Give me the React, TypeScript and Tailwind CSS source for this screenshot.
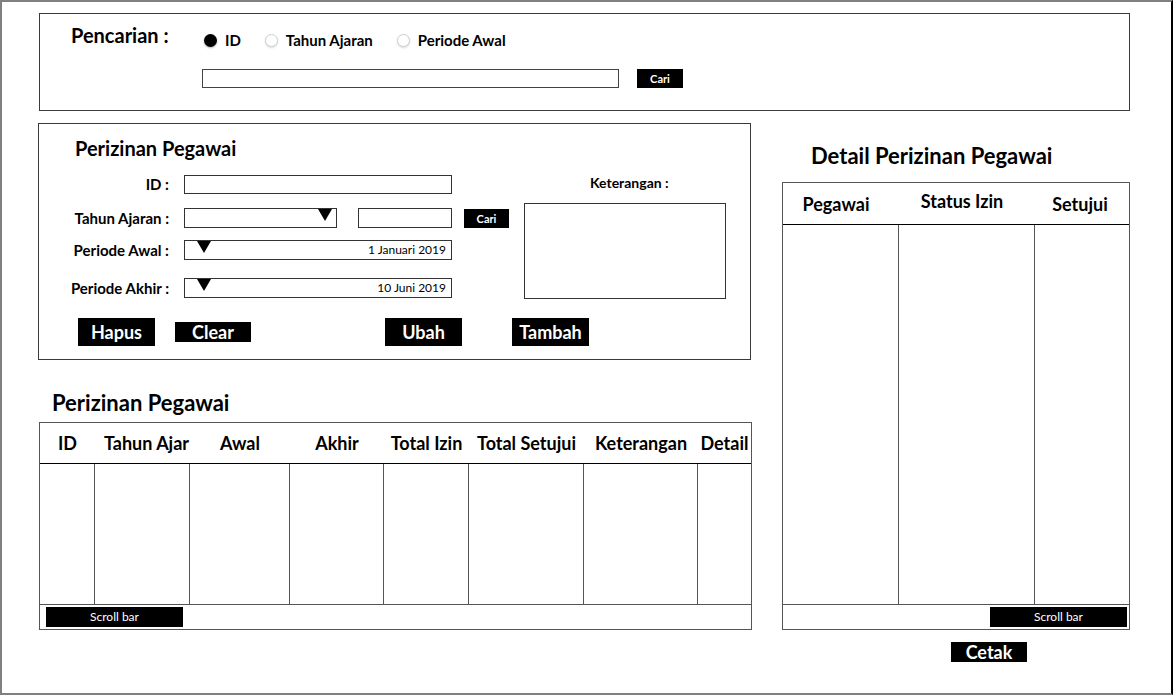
import type { ReactNode } from "react";

function Radio({ checked, label, className }: { checked?: boolean; label: string; className?: string }) {
  return (
    <div className={`flex items-center ${className ?? ""}`}>
      {checked ? (
        <span className="h-[13px] w-[13px] rounded-full bg-black shadow-[0_1px_2px_rgba(0,0,0,0.3)]" />
      ) : (
        <span className="h-[13px] w-[13px] rounded-full border border-[#cfcfcf] bg-white shadow-[0_1px_2px_rgba(0,0,0,0.15)]" />
      )}
      <span className="ml-[8px] text-[15px] font-bold leading-none">{label}</span>
    </div>
  );
}

function DownArrow({ className }: { className?: string }) {
  return <span className={`h-0 w-0 border-x-[7px] border-t-[12px] border-x-transparent border-t-black ${className ?? ""}`} />;
}

function Field({ label, children, className }: { label: string; children: ReactNode; className?: string }) {
  return (
    <div className={`flex items-center ${className ?? ""}`}>
      <span className="w-[130px] text-right text-[15px] font-bold leading-none">{label}</span>
      <div className="ml-[15px] flex items-center">{children}</div>
    </div>
  );
}

function DateInput({ value }: { value: string }) {
  return (
    <div className="flex h-[20px] w-[268px] items-start border border-[#333]">
      <DownArrow className="ml-[12px]" />
      <span className="ml-auto self-center pr-[5px] text-[12px] leading-none">{value}</span>
    </div>
  );
}

function BlackButton({ children, className }: { children: ReactNode; className: string }) {
  return (
    <button type="button" className={`flex items-center justify-center bg-black font-bold leading-none text-white ${className}`}>
      {children}
    </button>
  );
}

const listCols = [
  { label: "ID", w: "w-[55px]" },
  { label: "Tahun Ajar", w: "w-[95px] pl-[8px]" },
  { label: "Awal", w: "w-[100px]" },
  { label: "Akhir", w: "w-[94px]" },
  { label: "Total Izin", w: "w-[85px]" },
  { label: "Total Setujui", w: "w-[115px]" },
  { label: "Keterangan", w: "w-[114px]" },
  { label: "Detail", w: "flex-1" },
];

export default function App() {
  return (
    <div className="h-[695px] w-[1173px] border-2 border-[#808080] border-r-black bg-white font-['Lato',sans-serif] text-black">
      {/* Pencarian */}
      <div className="ml-[37px] mt-[11px] flex h-[98px] w-[1091px] border border-[#3a3a3a]">
        <div className="w-[162px] pl-[31px] pt-[9px] text-[20px] font-bold leading-[24px]">Pencarian :</div>
        <div className="pt-[16px]">
          <div className="flex h-[20px] items-center">
            <Radio checked label="ID" className="ml-[2px]" />
            <Radio label="Tahun Ajaran" className="ml-[24px]" />
            <Radio label="Periode Awal" className="ml-[24px]" />
          </div>
          <div className="mt-[19px] flex items-center">
            <div className="h-[19px] w-[417px] border border-[#444]" />
            <BlackButton className="ml-[18px] h-[19px] w-[46px] text-[11px]">Cari</BlackButton>
          </div>
        </div>
      </div>

      <div className="ml-[36px] mt-[12px] flex">
        {/* kolom kiri */}
        <div className="w-[713px]">
          <div className="h-[237px] border border-[#3a3a3a]">
            <div className="pl-[36px] pt-[12px] text-[20px] font-bold leading-[24px]">Perizinan Pegawai</div>
            <div className="mt-[15px] flex">
              <div className="w-[472px]">
                <Field label="ID :" className="h-[19px]">
                  <div className="h-[19px] w-[268px] border border-[#333]" />
                </Field>
                <Field label="Tahun Ajaran :" className="mt-[14px] h-[20px]">
                  <div className="flex h-[20px] w-[153px] items-start justify-end border border-[#333]">
                    <DownArrow className="mr-[4px]" />
                  </div>
                  <div className="ml-[21px] h-[20px] w-[94px] border border-[#333]" />
                  <BlackButton className="ml-[12px] h-[19px] w-[45px] text-[11px]">Cari</BlackButton>
                </Field>
                <Field label="Periode Awal :" className="mt-[12px] h-[20px]">
                  <DateInput value="1 Januari 2019" />
                </Field>
                <Field label="Periode Akhir :" className="mt-[18px] h-[20px]">
                  <DateInput value="10 Juni 2019" />
                </Field>
              </div>
              <div className="ml-[13px] w-[202px]">
                <div className="h-[16px] pl-[66px] text-[14px] font-bold leading-[16px]">Keterangan :</div>
                <div className="mt-[12px] h-[96px] border border-[#333]" />
              </div>
            </div>
            <div className="mt-[19px] flex items-center">
              <BlackButton className="ml-[39px] h-[28px] w-[77px] text-[18px]">Hapus</BlackButton>
              <BlackButton className="ml-[20px] h-[20px] w-[76px] text-[18px]">Clear</BlackButton>
              <BlackButton className="ml-[134px] h-[28px] w-[77px] text-[18px]">Ubah</BlackButton>
              <BlackButton className="ml-[50px] h-[28px] w-[77px] text-[18px]">Tambah</BlackButton>
            </div>
          </div>

          <div className="ml-[14px] mt-[30px] text-[22px] font-bold leading-[26px]">Perizinan Pegawai</div>
          <div className="ml-[1px] mt-[6px] w-[713px] border border-[#555]">
            <div className="flex h-[41px] items-center border-b border-black">
              {listCols.map((c) => (
                <div key={c.label} className={`${c.w} text-center text-[18px] font-bold leading-none`}>
                  {c.label}
                </div>
              ))}
            </div>
            <div className="flex h-[141px] border-b border-[#555]">
              {listCols.map((c, i) => (
                <div key={c.label} className={`${c.w} ${i < listCols.length - 1 ? "border-r border-[#555]" : ""}`} />
              ))}
            </div>
            <div className="h-[24px] pl-[6px] pt-[2px]">
              <div className="flex h-[20px] w-[137px] items-center justify-center bg-black text-[12px] leading-none text-white">
                Scroll bar
              </div>
            </div>
          </div>
        </div>

        {/* kolom kanan */}
        <div className="ml-[31px] w-[348px]">
          <div className="mt-[20px] pl-[29px] text-[22px] font-bold leading-[26px]">Detail Perizinan Pegawai</div>
          <div className="mt-[13px] border border-[#555]">
            <div className="flex h-[42px] items-center border-b border-black text-[18px] font-bold leading-none">
              <div className="w-[116px] pr-[10px] text-center">Pegawai</div>
              <div className="w-[136px] pb-[5px] pr-[10px] text-center">Status Izin</div>
              <div className="flex-1 pr-[4px] text-center">Setujui</div>
            </div>
            <div className="flex h-[380px] border-b border-[#555]">
              <div className="w-[116px] border-r border-[#555]" />
              <div className="w-[136px] border-r border-[#555]" />
              <div className="flex-1" />
            </div>
            <div className="flex h-[24px] justify-end pr-[2px] pt-[2px]">
              <div className="flex h-[20px] w-[137px] items-center justify-center bg-black text-[12px] leading-none text-white">
                Scroll bar
              </div>
            </div>
          </div>
          <BlackButton className="ml-[169px] mt-[12px] h-[20px] w-[76px] text-[18px]">Cetak</BlackButton>
        </div>
      </div>
    </div>
  );
}
